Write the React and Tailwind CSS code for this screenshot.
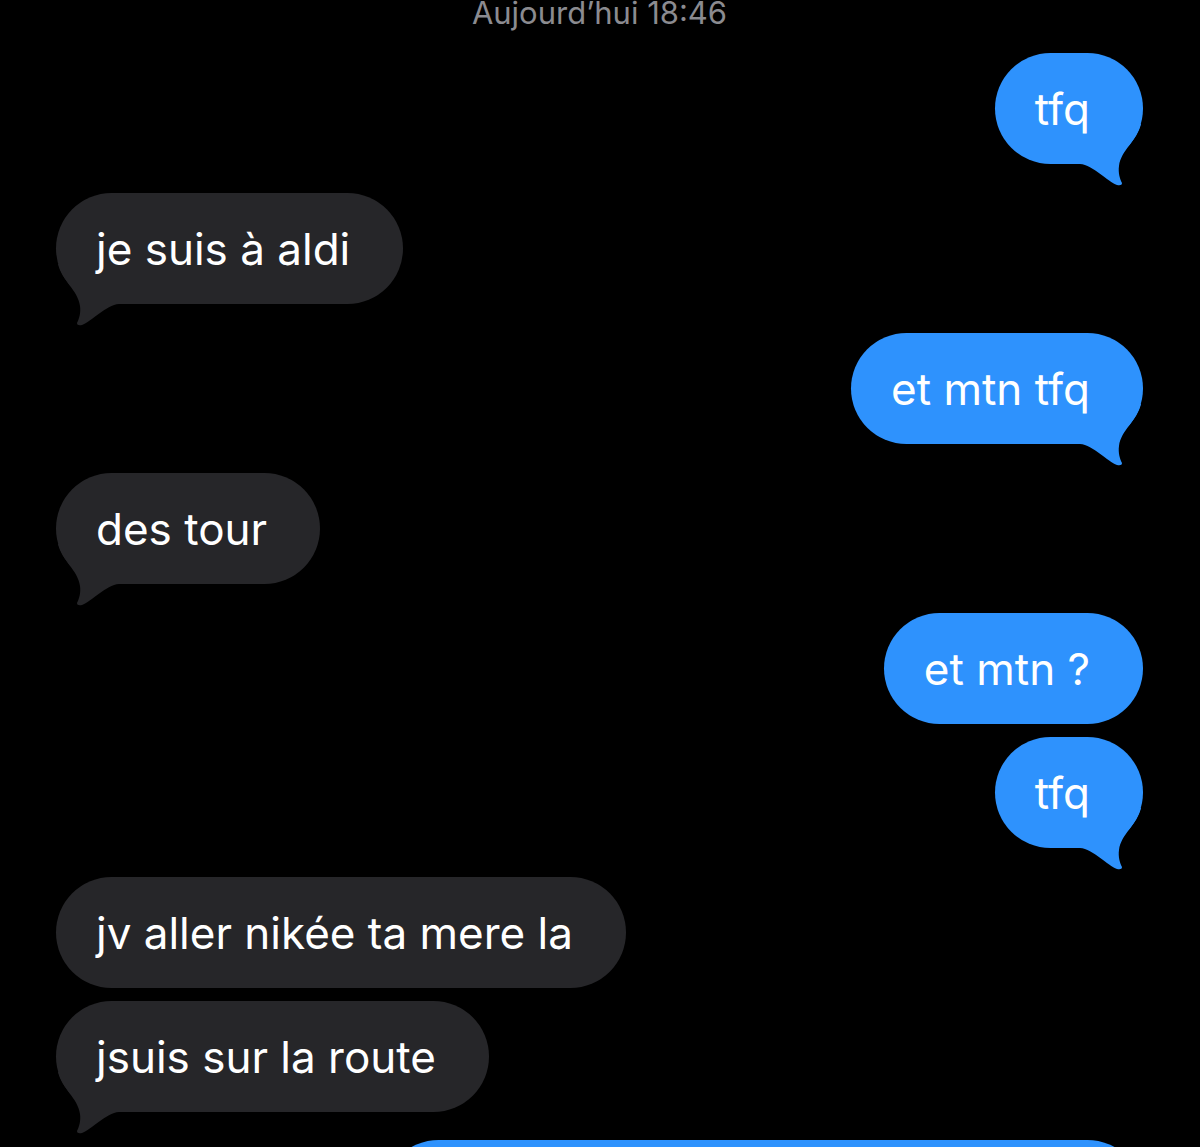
import React from "react";

const BLUE = "#2e92fd";
const GRAY = "#262629";

function Tail({ side, color }) {
  const path =
    "M81 3 C77 20 61 29 59 45 C58 52 60 58 62 62 Q62 65 57 64 C48 61 33 44 20 43 L0 43 L0 3 Z";
  return (
    <svg
      className={
        side === "right"
          ? "absolute right-[-7px] bottom-[-27px]"
          : "absolute left-[-7px] bottom-[-27px]"
      }
      width="90"
      height="70"
      viewBox="0 0 90 70"
    >
      {side === "right" ? (
        <path d={path} fill={color} />
      ) : (
        <g transform="translate(90,0) scale(-1,1)">
          <path d={path} fill={color} />
        </g>
      )}
    </svg>
  );
}

const msgs = [
  { t: "tfq", me: true, tail: true },
  { t: "je suis à aldi", me: false, tail: true },
  { t: "et mtn tfq", me: true, tail: true },
  { t: "des tour", me: false, tail: true },
  { t: "et mtn ?", me: true, tail: false },
  { t: "tfq", me: true, tail: true },
  { t: "jv aller nikée ta mere la", me: false, tail: false },
  { t: "jsuis sur la route", me: false, tail: true },
];

export default function App() {
  return (
    <div className="h-[1147px] w-full overflow-hidden bg-black flex flex-col pl-[56px] pr-[57px] [font-family:Inter,'Noto_Sans',sans-serif]">
      <div className="-mt-[2px] h-[30px] shrink-0 text-center text-[31px] leading-[30px] text-[#8b8b90] font-normal">
        Aujourd’hui 18:46
      </div>
      {msgs.map((m, i) => {
        const mt =
          i === 0 ? "mt-[25px]" : msgs[i - 1].tail ? "mt-[29px]" : "mt-[13px]";
        return (
          <div
            key={i}
            className={`relative shrink-0 flex items-center h-[111px] rounded-[56px] pl-[40px] pr-[53px] text-[44px] text-white whitespace-nowrap ${mt} ${
              m.me ? "self-end bg-[#2e92fd]" : "self-start bg-[#262629]"
            }`}
          >
            <span className="relative z-10">{m.t}</span>
            {m.tail && (
              <Tail side={m.me ? "right" : "left"} color={m.me ? BLUE : GRAY} />
            )}
          </div>
        );
      })}
      <div className="mt-[28px] shrink-0 self-end h-[111px] w-[760px] rounded-[56px] bg-[#2e92fd]" />
    </div>
  );
}
